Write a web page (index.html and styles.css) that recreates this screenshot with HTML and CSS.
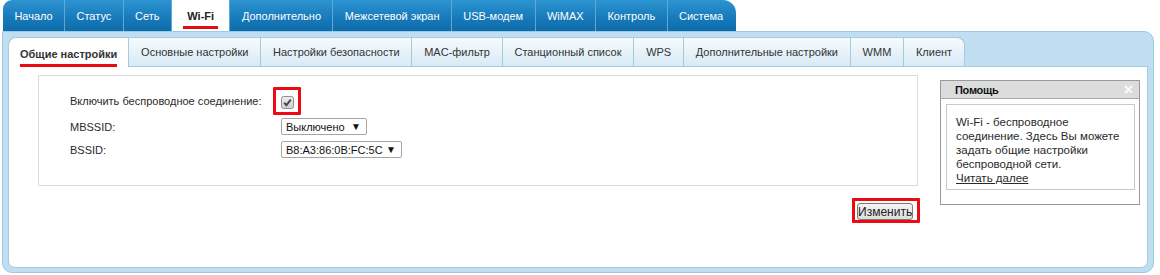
FILE: index.html
```html
<!DOCTYPE html>
<html lang="ru">
<head>
<meta charset="utf-8">
<title>Wi-Fi — Общие настройки</title>
<link rel="stylesheet" href="styles.css">
</head>
<body>
<div class="page">
  <nav class="topnav">
    <a class="ttab first">Начало</a>
    <a class="ttab">Статус</a>
    <a class="ttab">Сеть</a>
    <a class="ttab active"><span class="mark">Wi-Fi</span></a>
    <a class="ttab">Дополнительно</a>
    <a class="ttab">Межсетевой экран</a>
    <a class="ttab">USB-модем</a>
    <a class="ttab">WiMAX</a>
    <a class="ttab">Контроль</a>
    <a class="ttab last">Система</a>
  </nav>
  <div class="panel">
    <nav class="subnav">
      <a class="stab active"><span class="mark2">Общие настройки</span></a>
      <a class="stab">Основные настройки</a>
      <a class="stab">Настройки безопасности</a>
      <a class="stab">MAC-фильтр</a>
      <a class="stab">Станционный список</a>
      <a class="stab">WPS</a>
      <a class="stab">Дополнительные настройки</a>
      <a class="stab">WMM</a>
      <a class="stab last">Клиент</a>
    </nav>
    <div class="content">
      <div class="main">
        <div class="formbox">
          <div class="row row1">
            <span class="label">Включить беспроводное соединение:</span>
            <span class="redframe cbframe"><span class="cb"><svg width="13" height="13" viewBox="0 0 13 13"><defs><linearGradient id="g" x1="0" y1="0" x2="0" y2="1"><stop offset="0" stop-color="#ececec"/><stop offset="1" stop-color="#cfcfcf"/></linearGradient></defs><rect x="0.5" y="0.5" width="12" height="12" rx="2" fill="url(#g)" stroke="#8e8e8e"/><path d="M3.2 6.8 L5.4 9.2 L9.8 3.6" fill="none" stroke="#4a4a4a" stroke-width="2"/></svg></span></span>
          </div>
          <div class="row row2">
            <span class="label">MBSSID:</span>
            <span class="sel w1"><span>Выключено</span><span class="arr">▼</span></span>
          </div>
          <div class="row row3">
            <span class="label">BSSID:</span>
            <span class="sel w2"><span>B8:A3:86:0B:FC:5C</span><span class="arr">▼</span></span>
          </div>
        </div>
        <div class="actions">
          <span class="redframe btnframe"><button class="btn" type="button">Изменить</button></span>
        </div>
      </div>
      <aside class="help">
        <div class="help-head"><span class="help-title">Помощь</span><span class="close">×</span></div>
        <div class="help-body">Wi-Fi - беспроводное<br>соединение. Здесь Вы можете<br>задать общие настройки<br>беспроводной сети.<br><a class="more">Читать далее</a></div>
      </aside>
    </div>
  </div>
</div>
</body>
</html>
```
FILE: styles.css
```css
html, body {
  margin: 0;
  padding: 0;
  background: #fff;
}
body {
  font-family: "Liberation Sans", Arial, sans-serif;
  font-size: 11px;
  color: #333;
}
.page {
  padding: 0 6px 2px 2px;
}

/* top navigation */
.topnav {
  display: flex;
  height: 31px;
  margin-left: 1px;
}
.ttab {
  display: flex;
  align-items: center;
  padding: 0 11.4px;
  color: #fff;
  text-decoration: none;
  background: linear-gradient(#2d94d2, #1779b9 60%, #0f6cab);
  border-right: 1px solid #5fa9d9;
  white-space: nowrap;
}
.ttab.first { border-top-left-radius: 9px; }
.ttab.last { border-top-right-radius: 13px; border-right: none; padding-right: 13px; }
.ttab.active {
  background: #fff;
  color: #222;
  font-weight: bold;
}
.mark {
  display: inline-block;
  line-height: 13px;
  padding: 5px 4px 3px;
  border-bottom: 3px solid #ea0a10;
  margin-top: 2px;
}

/* panel */
.panel {
  background: #c0deef;
  border: 1px solid #9ccae4;
  border-radius: 0 10px 10px 10px;
  padding: 5px 5px 4px 5px;
}
.subnav {
  display: flex;
  height: 29px;
}
.stab {
  display: flex;
  align-items: center;
  padding: 0 11.8px;
  color: #333;
  text-decoration: none;
  background: linear-gradient(#f5fafd, #d9eaf5);
  border: 1px solid #a3cbe3;
  border-left: none;
  border-bottom: none;
  white-space: nowrap;
}
.stab.active {
  background: #fff;
  border-left: 1px solid #a3cbe3;
  border-top-left-radius: 8px;
  font-weight: bold;
  padding: 0 11px;
  position: relative;
  margin-bottom: -1px;
  z-index: 1;
}
.stab.last { border-top-right-radius: 8px; }
.mark2 {
  display: inline-block;
  line-height: 13px;
  padding-top: 4px;
  border-bottom: 3px solid #ea0a10;
  padding-bottom: 3px;
  margin-top: 6px;
}

/* content */
.content {
  display: flex;
  align-items: flex-start;
  height: 202px;
  box-sizing: border-box;
  background: #fff;
  border: 1px solid #a3cbe3;
  border-radius: 0 0 7px 7px;
  padding: 8px 7px 0 29px;
}
.main {
  width: 882px;
  display: flex;
  flex-direction: column;
}
.formbox {
  width: 880px;
  box-sizing: border-box;
  height: 111px;
  border: 1px solid #dcdcdc;
  padding: 11px 0 0 31px;
}
.row {
  display: flex;
  align-items: center;
}
.label {
  width: 211px;
  color: #2a2a2a;
}
.row2 { margin-top: 3px; }
.row3 { margin-top: 6px; }
.redframe {
  display: inline-flex;
  border: 3px solid #ee0a12;
  border-radius: 1px;
}
.cbframe {
  margin-left: -8px;
  padding: 6px 4px 3px 5px;
}
.cb { display: block; width: 13px; height: 13px; }
.cb svg { display: block; }
.sel {
  display: inline-flex;
  align-items: center;
  justify-content: space-between;
  height: 17px;
  box-sizing: border-box;
  border: 1px solid #a5a5a5;
  border-radius: 2px;
  padding: 0 5px 0 4px;
  color: #111;
  font-family: "Liberation Sans", Arial, sans-serif;
  font-size: 11px;
  background: #fff;
}
.sel.w1 { width: 86px; }
.sel.w2 { width: 121px; }
.arr { font-size: 10px; color: #111; }
.actions {
  display: flex;
  justify-content: flex-end;
  margin-top: 12px;
}
.btnframe {
  padding: 2px 4px 0 2px;
}
.btn {
  width: 56px;
  height: 17px;
  padding: 0;
  font-family: "Liberation Sans", Arial, sans-serif;
  font-size: 12px;
  color: #222;
  background: linear-gradient(#f4f4f4, #dedede);
  border: 1px solid #7a7a7a;
  border-radius: 3px;
}

/* help */
.help {
  margin-left: 20px;
  margin-top: 5px;
  width: 200px;
  height: 125px;
  box-sizing: border-box;
  border: 1px solid #9a9a9a;
}
.help-head {
  display: flex;
  align-items: center;
  justify-content: space-between;
  height: 17px;
  background: #dcdcdc;
  border-bottom: 1px solid #a9a9a9;
  padding: 0 6px 0 14px;
}
.help-title {
  font-weight: bold;
  color: #111;
  font-size: 11px;
  letter-spacing: -0.3px;
}
.close {
  color: #fbfbfb;
  font-size: 16px;
  font-weight: bold;
  line-height: 14px;
}
.help-body {
  margin: 5px 4px 0 5px;
  border: 1px solid #c8c8c8;
  height: 86px;
  box-sizing: border-box;
  padding: 10px 9px 0;
  line-height: 14px;
  font-size: 11.5px;
  color: #2a2a2a;
}
.more {
  color: #2a2a2a;
  text-decoration: underline;
}
```
